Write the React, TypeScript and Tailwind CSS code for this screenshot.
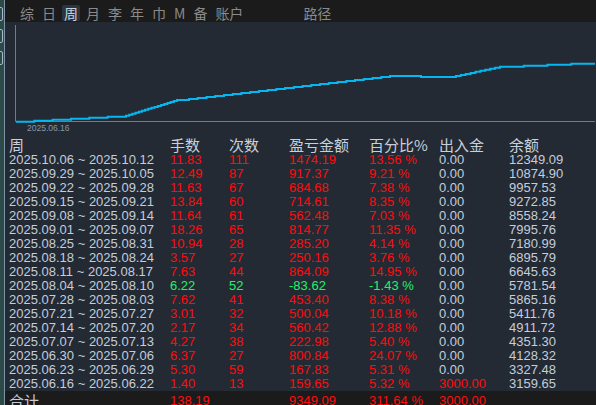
import React from 'react';

type Row = {
  week: string;
  lots: string;
  count: string;
  pnl: string;
  pct: string;
  flow: string;
  balance: string;
};

const rows: Row[] = [
  { week: '2025.10.06 ~ 2025.10.12', lots: '11.83', count: '111', pnl: '1474.19', pct: '13.56 %', flow: '0.00', balance: '12349.09' },
  { week: '2025.09.29 ~ 2025.10.05', lots: '12.49', count: '87', pnl: '917.37', pct: '9.21 %', flow: '0.00', balance: '10874.90' },
  { week: '2025.09.22 ~ 2025.09.28', lots: '11.63', count: '67', pnl: '684.68', pct: '7.38 %', flow: '0.00', balance: '9957.53' },
  { week: '2025.09.15 ~ 2025.09.21', lots: '13.84', count: '60', pnl: '714.61', pct: '8.35 %', flow: '0.00', balance: '9272.85' },
  { week: '2025.09.08 ~ 2025.09.14', lots: '11.64', count: '61', pnl: '562.48', pct: '7.03 %', flow: '0.00', balance: '8558.24' },
  { week: '2025.09.01 ~ 2025.09.07', lots: '18.26', count: '65', pnl: '814.77', pct: '11.35 %', flow: '0.00', balance: '7995.76' },
  { week: '2025.08.25 ~ 2025.08.31', lots: '10.94', count: '28', pnl: '285.20', pct: '4.14 %', flow: '0.00', balance: '7180.99' },
  { week: '2025.08.18 ~ 2025.08.24', lots: '3.57', count: '27', pnl: '250.16', pct: '3.76 %', flow: '0.00', balance: '6895.79' },
  { week: '2025.08.11 ~ 2025.08.17', lots: '7.63', count: '44', pnl: '864.09', pct: '14.95 %', flow: '0.00', balance: '6645.63' },
  { week: '2025.08.04 ~ 2025.08.10', lots: '6.22', count: '52', pnl: '-83.62', pct: '-1.43 %', flow: '0.00', balance: '5781.54' },
  { week: '2025.07.28 ~ 2025.08.03', lots: '7.62', count: '41', pnl: '453.40', pct: '8.38 %', flow: '0.00', balance: '5865.16' },
  { week: '2025.07.21 ~ 2025.07.27', lots: '3.01', count: '32', pnl: '500.04', pct: '10.18 %', flow: '0.00', balance: '5411.76' },
  { week: '2025.07.14 ~ 2025.07.20', lots: '2.17', count: '34', pnl: '560.42', pct: '12.88 %', flow: '0.00', balance: '4911.72' },
  { week: '2025.07.07 ~ 2025.07.13', lots: '4.27', count: '38', pnl: '222.98', pct: '5.40 %', flow: '0.00', balance: '4351.30' },
  { week: '2025.06.30 ~ 2025.07.06', lots: '6.37', count: '27', pnl: '800.84', pct: '24.07 %', flow: '0.00', balance: '4128.32' },
  { week: '2025.06.23 ~ 2025.06.29', lots: '5.30', count: '59', pnl: '167.83', pct: '5.31 %', flow: '0.00', balance: '3327.48' },
  { week: '2025.06.16 ~ 2025.06.22', lots: '1.40', count: '13', pnl: '159.65', pct: '5.32 %', flow: '3000.00', balance: '3159.65' },
];

const tabs = ['综', '日', '周', '月', '李', '年', '巾', 'M', '备', '账户'];

// staircase equity line: [x0, x1, y0, y1]
const segments: [number, number, number, number][] = [
  [17, 127, 121.7, 115.7],
  [127, 178, 115.7, 100],
  [178, 190, 100, 99],
  [190, 391, 99, 76],
  [391, 422, 76, 76],
  [422, 452, 77, 77],
  [452, 501, 77, 66.7],
  [501, 596, 66.7, 62.7],
];

function buildLine() {
  const pts: string[] = [];
  for (const [x0, x1, y0, y1] of segments) {
    const n = Math.max(1, Math.round(Math.abs(y1 - y0)));
    const w = (x1 - x0) / n;
    const dy = (y1 - y0) / n;
    for (let i = 0; i < n; i++) {
      const y = y0 + dy * i;
      pts.push(`${(x0 + w * i).toFixed(1)},${y.toFixed(1)}`);
      pts.push(`${(x0 + w * (i + 1)).toFixed(1)},${y.toFixed(1)}`);
    }
  }
  return pts.join(' ');
}

const mono = { fontFamily: '"Liberation Sans", "Noto Sans CJK SC", sans-serif' };
const cjk = { fontFamily: '"Noto Sans CJK SC", "Liberation Sans", sans-serif' };

const RED = 'text-[#ff0c0c]';
const GREEN = 'text-[#1ff26c]';
const GRAY = 'text-[#c3cddd]';
const COLS = 'grid grid-cols-[161px_59px_60px_80px_70px_70px_1fr] pl-[4px] whitespace-nowrap';

export default function App() {
  return (
    <div className="flex w-[596px] h-[405px] overflow-hidden bg-[#232a33]">
      {/* left strip */}
      <div className="w-[5px] shrink-0 bg-[#2c4a48] border-r border-[#7f93a6] flex flex-col overflow-hidden pt-[7px] gap-[8px]">
        <div className="w-[10px] h-[14px] -ml-[7px] border border-[#a9b9c9] rounded-[2px]" />
        <div className="w-[10px] h-[14px] -ml-[7px] border border-[#a9b9c9] rounded-[2px]" />
        <div className="w-[10px] h-[14px] -ml-[7px] border border-[#a9b9c9] rounded-[2px]" />
      </div>

      <div className="flex-1 flex flex-col min-w-0">
        {/* tabs */}
        <div className="h-[22px] shrink-0 bg-[#1b1b1b] flex items-start pt-[5px] pl-[15px] text-[14px] leading-[16px] text-[#8a8a8a]" style={cjk}>
          <div className="flex gap-[8px]">
            {tabs.map((t) => (
              <span
                key={t}
                className={t === '周' ? 'bg-[#2b3542] text-[#c8d3e0] rounded-[2px] px-[2px] -mx-[2px]' : ''}
              >
                {t}
              </span>
            ))}
          </div>
          <span className="ml-[60px]">路径</span>
        </div>

        {/* chart */}
        <div className="h-[114px] shrink-0">
          <svg width="590" height="114" viewBox="6 22 590 114">
            <line x1="16.5" y1="25" x2="16.5" y2="121.5" stroke="#7a7a7a" strokeWidth="1" />
            <line x1="16.5" y1="121.5" x2="596" y2="121.5" stroke="#7a7a7a" strokeWidth="1" />
            <polyline points={buildLine()} fill="none" stroke="#06b6f0" strokeWidth="2" />
            <text x="28" y="131" fontSize="8.5" fill="#8b97a3" style={mono}>
              2025.06.16
            </text>
          </svg>
        </div>

        {/* table header */}
        <div className={`h-[17px] shrink-0 ${COLS} items-center text-[15px] leading-[16px] text-[#c8d0dc]`} style={cjk}>
          <span>周</span>
          <span>手数</span>
          <span>次数</span>
          <span>盈亏金额</span>
          <span>百分比%</span>
          <span>出入金</span>
          <span>余额</span>
        </div>

        {/* rows */}
        <div className="flex flex-col text-[13px] leading-[14px]" style={mono}>
          {rows.map((r) => {
            const c = r.pnl.startsWith('-') ? GREEN : RED;
            return (
              <div key={r.week} className={`h-[14px] ${COLS}`}>
                <span className={GRAY}>{r.week}</span>
                <span className={c}>{r.lots}</span>
                <span className={c}>{r.count}</span>
                <span className={c}>{r.pnl}</span>
                <span className={c}>{r.pct}</span>
                <span className={r.flow === '0.00' ? GRAY : RED}>{r.flow}</span>
                <span className={GRAY}>{r.balance}</span>
              </div>
            );
          })}
        </div>

        {/* total */}
        <div className={`h-[18px] shrink-0 bg-[#1b1b1b] ${COLS} items-end text-[13px] leading-[16px]`} style={mono}>
          <span className={`${GRAY} text-[15px]`} style={cjk}>合计</span>
          <span className={RED}>138.19</span>
          <span />
          <span className={RED}>9349.09</span>
          <span className={RED}>311.64 %</span>
          <span className={RED}>3000.00</span>
          <span />
        </div>
      </div>
    </div>
  );
}
